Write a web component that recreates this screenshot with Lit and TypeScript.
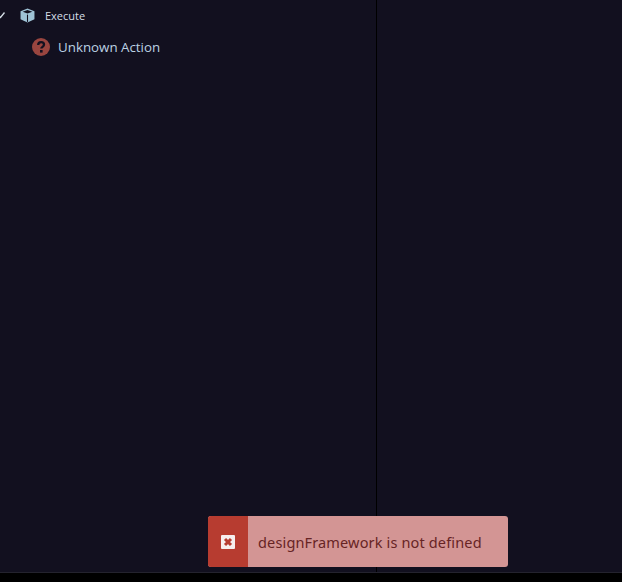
import { LitElement, html, css } from "lit";
import { customElement } from "lit/decorators.js";

@customElement("app-root")
export class AppRoot extends LitElement {
  static styles = css`
    :host { display: block; position: relative; width: 622px; height: 582px; overflow: hidden; background: #12101f; font-family: "Open Sans", "Noto Sans", sans-serif; }
    .wrap { display: flex; flex-direction: column; height: 582px; }
    .main { flex: 1; display: flex; }
    .left { width: 376px; border-right: 1px solid #000; box-sizing: content-box; padding-top: 6px; }
    .right { flex: 1; }
    .footer { height: 9px; background: #000; border-top: 1px solid #24232e; }
    .row { display: flex; align-items: center; }
    .exec { height: 18px; }
    .chev { width: 8px; height: 8px; margin-left: -2px; }
    .cube { width: 15px; height: 15px; margin-left: 14px; }
    .exec span { margin-left: 10px; font-size: 11px; color: #d5dee6; }
    .action { height: 24px; margin-top: 11px; padding-left: 32px; }
    .q { width: 18px; height: 18px; }
    .action span { margin-left: 8px; font-size: 13.33px; color: #bcd0e3; }
    .toast { position: absolute; left: 208px; top: 516px; width: 300px; height: 51px; display: flex; border-radius: 3px; overflow: hidden; background: #d39594; }
    .tico { width: 40px; background: #b73c30; display: flex; align-items: center; justify-content: center; }
    .tico svg { width: 14px; height: 14px; }
    .msg { flex: 1; display: flex; align-items: center; padding-left: 10px; font-family: "Noto Sans", sans-serif; font-size: 14.5px; color: #672424; letter-spacing: 0.15px; }
  `;
  render() {
    return html`
      <div class="wrap">
        <div class="main">
          <div class="left">
            <div class="row exec">
              <svg class="chev" viewBox="0 0 8 8"><path d="M0.5 4.5 L2.5 6.5 L6.5 1.5" fill="none" stroke="#d5dee6" stroke-width="1.3"/></svg>
              <svg class="cube" viewBox="0 0 14 14">
                <path d="M7 0.5 L13.5 3 L13.5 10.5 L7 13.5 L0.5 10.5 L0.5 3 Z" fill="#9fc3d6"/>
                <path d="M2.5 3.4 L7 1.8 L11.5 3.4 L7 5.2 Z" fill="#12101f"/>
                <path d="M7 6.2 L7 13" stroke="#12101f" stroke-width="1"/>
              </svg>
              <span>Execute</span>
            </div>
            <div class="row action">
              <svg class="q" viewBox="0 0 18 18">
                <circle cx="9" cy="9" r="9" fill="#99453f"/>
                <path d="M6.2 7 C6.2 5.2 7.5 4.2 9.1 4.2 C10.8 4.2 12 5.2 12 6.8 C12 8.8 9.3 8.9 9.3 10.6" fill="none" stroke="#12101f" stroke-width="2.3"/>
                <rect x="8" y="12" width="2.6" height="2.6" fill="#12101f"/>
              </svg>
              <span>Unknown Action</span>
            </div>
          </div>
          <div class="right"></div>
        </div>
        <div class="footer"></div>
      </div>
      <div class="toast">
        <div class="tico">
          <svg viewBox="0 0 14 14">
            <rect width="14" height="14" rx="1" fill="#f6eeee"/>
            <path d="M4 4 L10 10 M10 4 L4 10" stroke="#b73c30" stroke-width="3"/>
          </svg>
        </div>
        <div class="msg">designFramework is not defined</div>
      </div>
    `;
  }
}
